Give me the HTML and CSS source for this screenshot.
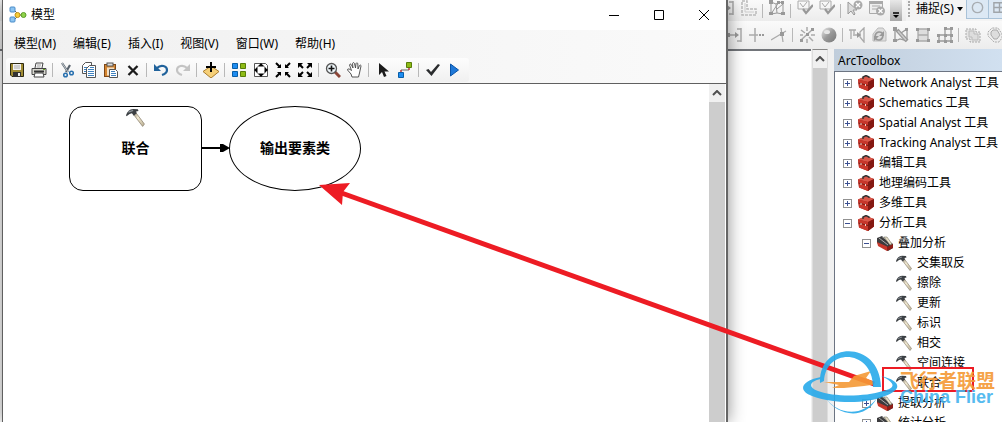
FILE: index.html
```html
<!DOCTYPE html>
<html lang="zh-CN">
<head>
<meta charset="utf-8">
<title>模型</title>
<link rel="stylesheet" href="styles.css">
</head>
<body>
<svg class="sprite" aria-hidden="true">
  <defs>
    <linearGradient id="ballFill" x1="0" y1="0" x2="1" y2="1"><stop offset="0" stop-color="#eee"/><stop offset=".5" stop-color="#999"/><stop offset="1" stop-color="#777"/></linearGradient>
    <linearGradient id="wood" x1="0" y1="0" x2="1" y2="1"><stop offset="0" stop-color="#8a8172"/><stop offset=".4" stop-color="#f4ecd4"/><stop offset="1" stop-color="#b8ac90"/></linearGradient>
  </defs>
  <symbol id="i-model" viewBox="0 0 18 18"><path d="M5 4l5 5h5M5 14l5-5" stroke="#555" fill="none"/><rect x="1" y="1" width="5" height="5" rx="1" fill="#8cc4f2" stroke="#4a8cc8"/><rect x="1" y="11" width="5" height="5" rx="1" fill="#8cc4f2" stroke="#4a8cc8"/><circle cx="8.500" cy="9" r="2.500" fill="#f6cd36" stroke="#c09018"/><circle cx="14.500" cy="9" r="2.500" fill="#8fd34a" stroke="#5c9c2c"/></symbol>
  <symbol id="i-save" viewBox="0 0 16 16"><path d="M1.500 1.500h13v13H3l-1.500-1.500z" fill="#a08c34" stroke="#2c2810"/><rect x="4" y="2" width="8" height="6" fill="#f2f2f2"/><path d="M5 4h6M5 6h6" stroke="#aaa"/><rect x="4" y="10" width="8" height="5" fill="#333"/><rect x="9" y="11" width="2" height="3" fill="#eee"/></symbol>
  <symbol id="i-print" viewBox="0 0 16 16"><path d="M4 6l1-5h7l-1 5" fill="#fff" stroke="#444"/><path d="M6 3h4M5.500 5h4" stroke="#999"/><path d="M1 6.500h14v6H1z" fill="#d8d8d0" stroke="#444"/><path d="M3 9.500h10" stroke="#333" stroke-width="2"/><path d="M4 11h8l1 4H3z" fill="#fff" stroke="#444"/><rect x="12" y="7" width="2" height="1" fill="#6a2"/></symbol>
  <symbol id="i-cut" viewBox="0 0 16 16"><path d="M3 1l6 9M11 3L7 10" stroke="#59636d" stroke-width="2.200"/><path d="M3 1l6 9" stroke="#c5ccd2"/><circle cx="6.500" cy="13" r="1.800" fill="none" stroke="#276fae" stroke-width="1.500"/><circle cx="12.500" cy="11" r="1.800" fill="none" stroke="#276fae" stroke-width="1.500"/></symbol>
  <symbol id="i-copy" viewBox="0 0 16 16"><path d="M1.500 3.500l3-3h6v11h-9z" fill="#fff" stroke="#555"/><path d="M3 5.500h4M3 7.500h4M3 9.500h4" stroke="#3f82bf"/><path d="M5.500 6.500l3-3h6v12h-9z" fill="#fff" stroke="#555"/><path d="M7 7.500h6M7 9.500h6M7 11.500h6M7 13.500h6M9 5.500h4" stroke="#3f82bf"/></symbol>
  <symbol id="i-paste" viewBox="0 0 16 16"><rect x="1.500" y="2.500" width="11" height="12" fill="#d5852f" stroke="#7e4817"/><rect x="4" y="1" width="6" height="3" fill="#ddd" stroke="#555"/><path d="M4 5.500h7v8H4z" fill="#f4e0c5"/><path d="M6.500 7.500h6l2 2v6h-8z" fill="#fff" stroke="#555"/><path d="M8 9.500h4M8 11.500h5M8 13.500h5" stroke="#3f82bf"/></symbol>
  <symbol id="i-x" viewBox="0 0 16 16"><path d="M3.500 4l9 9M12.500 4l-9 9" stroke="#1c1c1c" stroke-width="2.300"/></symbol>
  <symbol id="i-undo" viewBox="0 0 16 16"><path d="M4 6c4-4 10-2 10 2 0 3-2 4-5 5" fill="none" stroke="currentColor" stroke-width="2.200"/><path d="M1 2v7h7z" fill="currentColor"/></symbol>
  <symbol id="i-redo" viewBox="0 0 16 16"><path d="M12 6c-4-4-10-2-10 2 0 3 2 4 5 5" fill="none" stroke="currentColor" stroke-width="2.200"/><path d="M15 2v7H8z" fill="currentColor"/></symbol>
  <symbol id="i-add" viewBox="0 0 16 16"><path d="M8 4l8 5.500L8 16 0 9.500z" fill="#f5cf78" stroke="#a97c2c"/><path d="M8 0v10M3 5h10" stroke="#000" stroke-width="2"/></symbol>
  <symbol id="i-grid" viewBox="0 0 16 16"><path d="M1.500 1.500h5v5h-5zM1.500 9.500h5v5h-5z" fill="#1e8cf0" stroke="#075ea8"/><path d="M9.500 1.500h5v5h-5zM9.500 9.500h5v5h-5z" fill="#8ebb16" stroke="#577d09"/></symbol>
  <symbol id="i-full" viewBox="0 0 16 16"><path d="M1.500 1.500h11l2 2v11h-13z" fill="#fff" stroke="#555"/><circle cx="8" cy="8" r="5" fill="#fff" stroke="#999"/><path d="M8 1l3 3.500H5zM8 15l3-3.500H5zM1 8l3.500-3v6zM15 8l-3.500-3v6z" fill="#000"/></symbol>
  <symbol id="i-in" viewBox="0 0 16 16"><path d="M1 1l4 4M15 1l-4 4M1 15l4-4M15 15l-4-4" stroke="#000" stroke-width="2"/><path d="M6 2v4H2zM10 2v4h4zM6 14v-4H2zM10 14v-4h4z" fill="#000"/></symbol>
  <symbol id="i-out" viewBox="0 0 16 16"><path d="M6 6L3 3M10 6l3-3M6 10l-3 3M10 10l3 3" stroke="#000" stroke-width="2"/><path d="M1 1h5L1 6zM15 1h-5l5 5zM1 15h5l-5-5zM15 15h-5l5-5z" fill="#000"/></symbol>
  <symbol id="i-zoom" viewBox="0 0 16 16"><path d="M10 10l5 5" stroke="#8c4638" stroke-width="3"/><circle cx="6.500" cy="6.500" r="5" fill="#eef6fa" stroke="#555" stroke-width="1.300"/><path d="M6.500 3.500v6M3.500 6.500h6" stroke="#111" stroke-width="1.600"/></symbol>
  <symbol id="i-hand" viewBox="0 0 16 16"><path d="M5 15l-1-3-3.500-4c0-1.500 1.500-1.500 4 .5L2.500 3c.5-1.500 1.500-1 2 0L6 6 5.500 1.500C6 .3 7 .4 7.500 1.500L8.500 6l.5-4.500c.5-1 1.700-.8 1.800.3L11 7l1.500-3.500c.7-.8 1.700-.4 1.500.5l-1.500 7-1 4z" fill="#fff" stroke="#444" stroke-width=".900"/></symbol>
  <symbol id="i-pointer" viewBox="0 0 16 16"><path d="M4 1v12l3-3 2 5 2.500-1-2-4.500H14z" fill="#1a1a1a"/></symbol>
  <symbol id="i-link" viewBox="0 0 16 16"><path d="M4 11V8h8V5" fill="none" stroke="#666"/><path d="M4 10V8M12 5v3" stroke="#d22"/><path d="M1.500 10.500h5v5h-5z" fill="#1e8cf0" stroke="#075ea8"/><path d="M9.500.5h5v5h-5z" fill="#8ebb16" stroke="#577d09"/></symbol>
  <symbol id="i-check" viewBox="0 0 16 16"><path d="M1 8l2.500-1L6 10 13 2l2 1-8.500 11z" fill="#2a2c2e"/></symbol>
  <symbol id="i-run" viewBox="0 0 16 16"><path d="M3.500 2v12l8-6z" fill="#1e78d8" stroke="#0b55a8"/></symbol>
  <symbol id="i-hammer" viewBox="0 0 16 16"><path d="M6 5l2-1.500 7.500 10-1.500 2z" fill="url(#wood)" stroke="#857b68" stroke-width=".600"/><path d="M0 6C1 3 3 1 6 .8l4 .2.500 1.500-2 .5.500 1.500L6.500 6.500 5 4.500 3 5 .5 7z" fill="#3c4044"/><path d="M2 3.500L6 2" stroke="#8b9298"/></symbol>
  <symbol id="i-box" viewBox="0 0 16 16"><path d="M0 4.500L8 1l8 3v7.500L10 16 1 12.500z" fill="#a9241c"/><path d="M0 4.500L8 1l8 3-6 3z" fill="#d9584a"/><path d="M0 4.500L10 7v9l-9-3.500z" fill="#c8372b"/><path d="M10 7l6-3v7.500L10 16z" fill="#861812"/><path d="M.5 8L10 10.500 16 7" fill="none" stroke="#7a1a12"/><path d="M5 4V2l3-1.500L11 2v1" fill="none" stroke="#333" stroke-width="1.400"/><path d="M3 8v2M7.500 9v2" stroke="#efd9d0"/></symbol>
  <symbol id="i-set" viewBox="0 0 16 16"><path d="M0 3l5-2 11 8v4l-5 3L0 8z" fill="#3c3c3e"/><path d="M0 7l10 4.500V16L1 11z" fill="#c7372b"/><path d="M10 12l6-3v4l-6 3z" fill="#8f1d17"/><path d="M2 3l9 7M5 1.500l9 7" stroke="#aaa"/><path d="M7 2l3 0 5 7-2 1z" fill="#e8dfc8" stroke="#665" stroke-width=".500"/></symbol>
  <symbol id="g-extend" viewBox="0 0 16 16"><path d="M1 8h8M14 1v14M10 2h4M10 14h4" stroke="#aaa" stroke-width="1.500" fill="none"/><path d="M8 5l4 3-4 3zM0 6h3v4H0z" fill="#999"/></symbol>
  <symbol id="g-step" viewBox="0 0 16 16"><path d="M1 1h5v8h9v6H1z" stroke="#bbb" stroke-width="1.500" stroke-dasharray="3 1" fill="none"/><path d="M4 3v9h9" stroke="#ccc" fill="none"/></symbol>
  <symbol id="g-net" viewBox="0 0 16 16"><path d="M2 2l5 2 3-2 4 1v11l-6-1-6 1zM2 14L10 2M7 4l1 9M8 9l6-5" stroke="#999" fill="none"/><path d="M0 0h4v4H0zM12 1h3v3h-3zM0 12h4v3H0zM12 12h4v3h-4zM8 1h3v3H8z" fill="#999"/></symbol>
  <symbol id="g-check" viewBox="0 0 16 16"><path d="M1 1h11v8H1zM3 3l3 4 4-5" stroke="#aaa" fill="none"/><path d="M6 9l3 4 7-8" stroke="#999" stroke-width="2.200" fill="none"/></symbol>
  <symbol id="g-arrowx" viewBox="0 0 16 16"><path d="M1 2v12l3-3 3 4 1-1-2-4h4z" fill="#ddd" stroke="#999"/><circle cx="11" cy="5" r="4.500" fill="#aaa"/><path d="M9 3l4 4M13 3L9 7" stroke="#fff" stroke-width="1.300"/></symbol>
  <symbol id="g-tablex" viewBox="0 0 16 16"><path d="M.5 1.500h13v12H.5zM3 6h8M3 9h6" stroke="#aaa" fill="#eee"/><path d="M0 1h14v3H0z" fill="#aaa"/><circle cx="11.500" cy="11" r="4.500" fill="#aaa"/><path d="M9.500 9l4 4M13.500 9l-4 4" stroke="#fff" stroke-width="1.300"/></symbol>
  <symbol id="g-cross" viewBox="0 0 16 16"><path d="M6 1v14M0 8h9" stroke="#aaa" stroke-width="1.500"/><path d="M10 8h5" stroke="#999" stroke-width="2" stroke-dasharray="2 1"/></symbol>
  <symbol id="g-split" viewBox="0 0 16 16"><path d="M0 13L15 4M10 1l2 14" stroke="#aaa" stroke-width="1.300"/><path d="M9 5h4v4H9z" fill="#999"/></symbol>
  <symbol id="g-burst" viewBox="0 0 16 16"><path d="M2 13L14 2M2 3l4 3M10 10l4 4M8 0v4M8 12v4M1 8h3M12 8h4" stroke="#aaa" stroke-width="1.500"/><path d="M7 6h3v3H7zM1 12h3v3H1zM12 1h3v3h-3z" fill="#999"/></symbol>
  <symbol id="g-ball" viewBox="0 0 16 16"><circle cx="8" cy="8" r="7.500" fill="url(#ballFill)"/><ellipse cx="6" cy="5" rx="3" ry="2" fill="#e6e6e6"/></symbol>
  <symbol id="g-align" viewBox="0 0 16 16"><path d="M0 3h7M2 3v9M5 3v4M4 8h6M15 1l-4 4v5l4 5z" stroke="#aaa" fill="none" stroke-width="1.300"/><path d="M8 5l4 3-4 3z" fill="#999"/></symbol>
  <symbol id="g-rotate" viewBox="0 0 16 16"><path d="M2 7l5-6h5l3 4v9H2z" fill="#ddd" stroke="#bbb"/><path d="M4 9c1-5 6-5 8-2M12 9c-1 5-6 5-8 2" fill="none" stroke="#999" stroke-width="1.600"/><path d="M13 4v5H8zM3 14V9h5z" fill="#999"/></symbol>
  <symbol id="g-tool" viewBox="0 0 16 16"><path d="M2 14V2l6 4 6-4v11M2 14l5-2 7 2" stroke="#999" fill="none" stroke-width="1.300"/><path d="M4 3l10 11" stroke="#999" stroke-width="4"/><path d="M5 4l8 9" stroke="#ccc" stroke-width="1.500"/><path d="M0 0h4v4H0zM12 1h3v3h-3zM0 12h4v3H0z" fill="#999"/></symbol>
  <symbol id="g-rect" viewBox="0 0 16 16"><path d="M3 2h10v12H3zM3 8h10" stroke="#aaa" fill="#ddd" stroke-width="1.300"/><path d="M1 1h3v3H1zM12 1h3v3h-3zM1 12h3v3H1zM12 12h3v3h-3z" fill="#999"/></symbol>
  <symbol id="g-topo" viewBox="0 0 16 16"><path d="M2 8h12v6H2zM8 2h6v12H8z" stroke="#999" fill="none" stroke-width="1.300"/><path d="M0 7h3v3H0zM7 7h3v3H7zM13 7h3v3h-3zM7 0h3v3H7zM13 0h3v3h-3zM0 13h3v3H0zM7 13h3v3H7zM13 13h3v3h-3z" fill="#999"/></symbol>
  <symbol id="g-union" viewBox="0 0 16 16"><path d="M1 2h10v3h4v10H5v-3H1z" stroke="#aaa" fill="#e4e4e4" stroke-dasharray="2 1"/><path d="M4 4h5v3h4v6H7v-3H4z" stroke="#bbb" fill="#ddd"/></symbol>
  <symbol id="g-hex" viewBox="0 0 16 16"><path d="M1 5l4-4h6l4 6v4l-3 4H7L1 9z" stroke="#aaa" fill="#eee" stroke-dasharray="2 1"/><path d="M4 5l2-2h4l3 5-3 4H7L4 8z" stroke="#aaa" fill="#ddd"/></symbol>
</svg>

<main class="desktop">
  <section class="app">
    <div class="app-bar app-bar-top">
      <div class="tools">
        <svg class="ico"><use href="#g-extend"/></svg><svg class="ico"><use href="#g-step"/></svg><i class="sep"></i>
        <svg class="ico"><use href="#g-net"/></svg><i class="sep"></i>
        <svg class="ico"><use href="#g-check"/></svg><svg class="ico"><use href="#g-check"/></svg><i class="sep"></i>
        <svg class="ico"><use href="#g-arrowx"/></svg><svg class="ico"><use href="#g-tablex"/></svg>
        <button class="overflow" aria-label="更多"><svg viewBox="0 0 12 21"><path d="M3 13h6" stroke="#000" stroke-width="1.500"/><path d="M3 15h6l-3 3z"/></svg></button>
      </div>
      <div class="snap">
        <i class="grip"></i>
        <button class="snap-menu">捕捉(S)<svg class="caret" viewBox="0 0 6 4"><path d="M0 0h6L3 4z"/></svg></button>
        <button class="snap-btn" aria-label="点捕捉"><svg viewBox="0 0 16 16"><circle cx="8" cy="8" r="5.500" fill="none" stroke="#a8adb2" stroke-width="1.500"/></svg></button>
        <button class="snap-btn" aria-label="端点捕捉"><svg viewBox="0 0 16 16"><path d="M2 3h12v10H2zM8 3v10M2 8h12" fill="none" stroke="#a0a5aa" stroke-width="1.500"/></svg></button>
      </div>
    </div>
    <div class="app-bar app-bar-edit">
      <div class="tools">
        <svg class="ico"><use href="#g-extend"/></svg><svg class="ico"><use href="#g-cross"/></svg><svg class="ico"><use href="#g-split"/></svg><i class="sep"></i>
        <svg class="ico"><use href="#g-burst"/></svg><svg class="ico"><use href="#g-ball"/></svg><i class="sep"></i>
        <svg class="ico"><use href="#g-align"/></svg><svg class="ico"><use href="#g-rotate"/></svg><svg class="ico"><use href="#g-tool"/></svg><svg class="ico"><use href="#g-rect"/></svg><svg class="ico"><use href="#g-topo"/></svg><i class="sep"></i>
        <svg class="ico"><use href="#g-union"/></svg><svg class="ico"><use href="#g-hex"/></svg>
      </div>
    </div>
    <div class="workspace">
      <div class="map"></div>
      <div class="scroll map-scroll"><svg viewBox="0 0 10 6"><path d="M1 5l4-4 4 4"/></svg><span class="thumb"></span></div>
      <aside class="dock">
        <h2 class="dock-title">ArcToolbox</h2>
        <ul class="tree">
          <li><button class="tog" aria-label="展开"></button><svg class="tico"><use href="#i-box"/></svg><span>Network Analyst 工具</span></li>
          <li><button class="tog" aria-label="展开"></button><svg class="tico"><use href="#i-box"/></svg><span>Schematics 工具</span></li>
          <li><button class="tog" aria-label="展开"></button><svg class="tico"><use href="#i-box"/></svg><span>Spatial Analyst 工具</span></li>
          <li><button class="tog" aria-label="展开"></button><svg class="tico"><use href="#i-box"/></svg><span>Tracking Analyst 工具</span></li>
          <li><button class="tog" aria-label="展开"></button><svg class="tico"><use href="#i-box"/></svg><span>编辑工具</span></li>
          <li><button class="tog" aria-label="展开"></button><svg class="tico"><use href="#i-box"/></svg><span>地理编码工具</span></li>
          <li><button class="tog" aria-label="展开"></button><svg class="tico"><use href="#i-box"/></svg><span>多维工具</span></li>
          <li><button class="tog open" aria-label="折叠"></button><svg class="tico"><use href="#i-box"/></svg><span>分析工具</span></li>
          <li class="l2"><button class="tog open" aria-label="折叠"></button><svg class="tico"><use href="#i-set"/></svg><span>叠加分析</span></li>
          <li class="l3"><svg class="tico"><use href="#i-hammer"/></svg><span>交集取反</span></li>
          <li class="l3"><svg class="tico"><use href="#i-hammer"/></svg><span>擦除</span></li>
          <li class="l3"><svg class="tico"><use href="#i-hammer"/></svg><span>更新</span></li>
          <li class="l3"><svg class="tico"><use href="#i-hammer"/></svg><span>标识</span></li>
          <li class="l3"><svg class="tico"><use href="#i-hammer"/></svg><span>相交</span></li>
          <li class="l3"><svg class="tico"><use href="#i-hammer"/></svg><span>空间连接</span></li>
          <li class="l3"><svg class="tico"><use href="#i-hammer"/></svg><span>联合</span></li>
          <li class="l2"><button class="tog" aria-label="展开"></button><svg class="tico"><use href="#i-set"/></svg><span>提取分析</span></li>
          <li class="l2"><button class="tog" aria-label="展开"></button><svg class="tico"><use href="#i-set"/></svg><span>统计分析</span></li>
        </ul>
      </aside>
    </div>
  </section>

  <section class="window">
    <header class="titlebar">
      <svg class="logo"><use href="#i-model"/></svg>
      <h1>模型</h1>
      <button aria-label="最小化"><svg viewBox="0 0 12 12"><path d="M1 6.500h10"/></svg></button>
      <button aria-label="最大化"><svg viewBox="0 0 12 12"><path d="M1.500 1.500h9v9h-9z"/></svg></button>
      <button aria-label="关闭"><svg viewBox="0 0 12 12"><path d="M1 1l10 10M11 1L1 11"/></svg></button>
    </header>
    <nav class="menu">
      <button>模型(M)</button><button>编辑(E)</button><button>插入(I)</button><button>视图(V)</button><button>窗口(W)</button><button>帮助(H)</button>
    </nav>
    <div class="toolrow">
      <div class="toolbar">
        <button aria-label="保存"><svg><use href="#i-save"/></svg></button><button aria-label="打印"><svg><use href="#i-print"/></svg></button><i class="sep"></i>
        <button aria-label="剪切"><svg><use href="#i-cut"/></svg></button><button aria-label="复制"><svg><use href="#i-copy"/></svg></button><button aria-label="粘贴"><svg><use href="#i-paste"/></svg></button><button aria-label="删除"><svg><use href="#i-x"/></svg></button><i class="sep"></i>
        <button class="blue" aria-label="撤消"><svg><use href="#i-undo"/></svg></button><button class="off" aria-label="恢复"><svg><use href="#i-redo"/></svg></button><i class="sep"></i>
        <button aria-label="添加数据"><svg><use href="#i-add"/></svg></button><i class="sep"></i>
        <button aria-label="自动布局"><svg><use href="#i-grid"/></svg></button><button aria-label="全图"><svg><use href="#i-full"/></svg></button><button aria-label="固定缩小"><svg><use href="#i-in"/></svg></button><button aria-label="固定放大"><svg><use href="#i-out"/></svg></button><i class="sep"></i>
        <button aria-label="放大"><svg><use href="#i-zoom"/></svg></button><button aria-label="平移"><svg><use href="#i-hand"/></svg></button><i class="sep"></i>
        <button aria-label="选择"><svg><use href="#i-pointer"/></svg></button><button aria-label="连接"><svg><use href="#i-link"/></svg></button><i class="sep"></i>
        <button aria-label="验证"><svg><use href="#i-check"/></svg></button><button aria-label="运行"><svg><use href="#i-run"/></svg></button>
      </div>
    </div>
    <div class="stage">
      <div class="canvas">
        <div class="node tool-node"><svg class="node-ico"><use href="#i-hammer"/></svg>联合</div>
        <svg class="connector" viewBox="0 0 30 10"><path d="M0 5h22" stroke="#000" stroke-width="2"/><path d="M18 1h3l7 4-7 4h-3z"/></svg>
        <div class="node data-node">输出要素类</div>
      </div>
      <div class="scroll"><svg viewBox="0 0 10 6"><path d="M1 5l4-4 4 4"/></svg><span class="thumb"></span></div>
    </div>
  </section>

  <svg class="callout" viewBox="0 0 660 250" aria-hidden="true"><path d="M26 20L564 213" stroke="#ed1c24" stroke-width="5"/><path d="M9 14l31-2-7 9-1 13z" fill="#ed1c24"/><rect x="573" y="197" width="90" height="23" fill="none" stroke="#ed1c24" stroke-width="2"/></svg>

  <div class="watermark">
    <svg viewBox="0 0 102 70" aria-hidden="true">
      <path d="M26 37l25 0 5-6 17-5-5 7 12 6-14 2-20 2-12 0 7-3z" fill="#f59a36"/>
      <g fill="#27aaeb"><path d="M22 38C20-4 82-6 83 42l-8 0C75 4 28 2 26 36z"/><path d="M23 32C2 36 0 46 14 51 36 59 68 59 87 51 104 45 104 36 83 31 98 38 98 43 85 46 66 52 36 52 20 46 9 42 12 36 23 34z"/><path d="M27 52c13 19 38 20 52 1C66 77 38 70 27 52z"/></g>
    </svg>
    <p><strong>飞行者联盟</strong><span>China Flier</span></p>
  </div>
</main>
</body>
</html>
```
FILE: styles.css
```css
* { box-sizing: border-box; }
body, h1, h2, p, ul { margin: 0; padding: 0; }
body {
  height: 100vh;
  overflow: hidden;
  font: 12px/20px "Noto Sans", "Noto Sans CJK SC", sans-serif;
  color: #000;
}
button {
  padding: 0;
  border: 0;
  background: none;
  font: inherit;
  color: inherit;
}
svg { display: block; flex: none; }
.sprite { position: absolute; width: 0; height: 0; }
.desktop { position: relative; height: 100%; overflow: hidden; }

/* main application, behind the model window */
.app {
  height: 100%;
  display: flex;
  flex-direction: column;
  background: #f0f0f0;
}
.app-bar {
  display: flex;
  flex: none;
  overflow: hidden;
  background: linear-gradient(#fafafa, #ececec);
}
.app-bar-top { height: 21px; padding-left: calc(100% - 286px); }
.app-bar-edit { height: 28px; padding-left: calc(100% - 278px); }
.tools, .snap { display: flex; flex: none; }
.tools { align-items: center; }
.app-bar-top .ico { margin-bottom: 5px; }
.ico { width: 16px; height: 16px; margin: 0 3px; }
.sep { flex: none; width: 1px; height: 14px; margin: 0 3px 0 2px; background: #b8b8b8; }
.overflow {
  width: 12px;
  height: 21px;
  margin-left: 2px;
  background: linear-gradient(#e8e8e8, #a8a8a8);
}
.snap { margin-left: 4px; align-items: center; background: #f4f4f4; }
.grip { width: 2px; height: 16px; margin: 0 6px 4px 2px; border-left: 2px dotted #a8a8a8; }
.snap-menu {
  display: flex;
  align-items: center;
  gap: 3px;
  height: 20px;
  margin-bottom: 4px;
  padding-right: 3px;
}
.caret { width: 6px; height: 4px; }
.snap-btn { width: 23px; height: 19px; padding: 0 3px 4px; margin: 0 -1px 3px 0; border: 1px solid #a9c2d8; border-top: 0; background: #dce8f4; }

.workspace { flex: 1; display: flex; min-height: 0; }
.map { flex: 1; border-top: 2px solid #72757a; background: #fff; }
.scroll {
  flex: none;
  display: flex;
  flex-direction: column;
  width: 16px;
  background: #f0f0f0;
}
.scroll svg { width: 10px; height: 6px; margin: 6px auto; }
.scroll path { fill: none; stroke: #505050; stroke-width: 2; }
.thumb { flex: 1; background: #cdcdcd; }
.map-scroll { margin: 0 6px 0 1px; border-top: 1px solid #888; border-right: 1px solid #ddd; border-left: 1px solid #ddd; }
.dock { flex: none; width: 168px; display: flex; flex-direction: column; min-height: 0; }
.dock-title {
  height: 22px;
  padding-left: 4px;
  font-size: 12px;
  font-weight: 400;
  line-height: 23px;
  background: linear-gradient(90deg, #c0cddb, #d1e0f0);
}
.tree {
  flex: 1;
  min-height: 0;
  overflow: hidden;
  padding: 1px 0 0 8px;
  border-top: 1px solid #6c7482;
  border-left: 1px solid #6c7482;
  background: #fff;
  list-style: none;
  white-space: nowrap;
}
.tree li { display: flex; align-items: center; height: 20px; }
.tree .l2 { padding-left: 19px; }
.tree .l3 { padding-left: 53px; }
.tog {
  width: 9px;
  height: 9px;
  margin-right: 6px;
  border: 1px solid #919191;
  background:
    linear-gradient(#3b4f91, #3b4f91) center / 5px 1px no-repeat,
    linear-gradient(#3b4f91, #3b4f91) center / 1px 5px no-repeat,
    #fff;
}
.tog.open { background: linear-gradient(#3b4f91, #3b4f91) center / 5px 1px no-repeat, #fff; }
.tico { width: 16px; height: 16px; margin-right: 5px; }

/* model builder window */
.window {
  position: absolute;
  top: 0;
  bottom: 0;
  left: 2px;
  right: 274px;
  display: flex;
  flex-direction: column;
  border-left: 1px solid #606060;
  border-right: 2px solid #666;
  background: #f3f3f3;
  box-shadow: 0 0 16px rgba(0, 0, 0, .45);
}
.titlebar {
  flex: none;
  display: flex;
  align-items: center;
  height: 30px;
  padding-left: 6px;
  background: #fff;
}
.logo { width: 18px; height: 18px; }
.titlebar h1 { flex: 1; padding-left: 4px; font-size: 12px; font-weight: 400; }
.titlebar button { width: 45px; height: 30px; }
.titlebar svg:not(.logo) { width: 12px; height: 12px; margin: auto; }
.titlebar button path { fill: none; stroke: #000; }
.menu {
  flex: none;
  display: flex;
  gap: 17px;
  height: 28px;
  padding: 0 11px;
  background: linear-gradient(90deg, #f0f0f0, #fafafa);
}
.toolrow { flex: none; height: 25px; background: linear-gradient(90deg, #f0f0f0, #fafafa); }
.toolbar {
  display: flex;
  align-items: center;
  width: max-content;
  height: 24px;
  margin-left: 3px;
  padding-right: 3px;
  border-radius: 3px;
  background: linear-gradient(#fdfdfd, #f0f0f0);
}
.toolbar button { width: 22px; height: 22px; }
.toolbar svg { width: 16px; height: 16px; margin: auto; }
.blue { color: #21639c; }
.off { color: #c4c4c4; }
.stage { flex: 1; display: flex; min-height: 0; border-top: 1px solid #606060; background: #fff; }
.stage .scroll { margin-right: 1px; }

/* diagram nodes have free positions on the canvas */
.canvas { position: relative; flex: 1; background: #fff; overflow: hidden; }
.node {
  position: absolute;
  top: 22px;
  display: flex;
  align-items: center;
  justify-content: center;
  height: 85px;
  padding-bottom: 4px;
  border: 1px solid #000;
  background: #fff;
  font: bold 14px/20px "Noto Sans CJK SC", sans-serif;
}
.tool-node { left: 66px; width: 133px; border-radius: 14px; }
.data-node { left: 226px; width: 132px; border-radius: 50%; }
.node-ico { position: absolute; top: 1px; left: 56px; width: 19px; height: 19px; }
.connector { position: absolute; top: 59px; left: 199px; width: 30px; height: 10px; }

/* annotation laid over both windows */
.callout { position: absolute; top: 171px; right: 32px; width: 660px; height: 250px; overflow: visible; }
.watermark {
  position: absolute;
  top: 345px;
  right: 7px;
  display: flex;
  opacity: .9;
}
.watermark svg { width: 102px; height: 70px; }
.watermark p { display: flex; flex-direction: column; padding-top: 25px; white-space: nowrap; }
.watermark strong { font: bold 19px/19px "Noto Sans CJK SC", sans-serif; color: #f59a36; }
.watermark span { font: bold 18px/16px "Liberation Sans", sans-serif; color: #45b4ee; }
```
